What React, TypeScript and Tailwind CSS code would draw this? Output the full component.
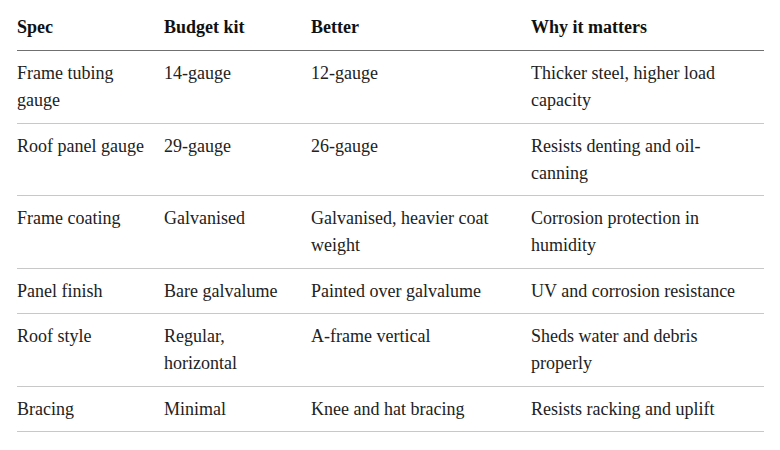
import React from "react";

const rows: [string, string, string, string][] = [
  ["Frame tubing gauge", "14-gauge", "12-gauge", "Thicker steel, higher load capacity"],
  ["Roof panel gauge", "29-gauge", "26-gauge", "Resists denting and oil-canning"],
  ["Frame coating", "Galvanised", "Galvanised, heavier coat weight", "Corrosion protection in humidity"],
  ["Panel finish", "Bare galvalume", "Painted over galvalume", "UV and corrosion resistance"],
  ["Roof style", "Regular, horizontal", "A-frame vertical", "Sheds water and debris properly"],
  ["Bracing", "Minimal", "Knee and hat bracing", "Resists racking and uplift"],
];

export default function App() {
  return (
    <div
      className="w-[780px] h-[450px] bg-white pl-[17px] pt-[5px] text-[18px] leading-[27px] text-[#222222]"
      style={{ fontFamily: '"Liberation Serif", "Times New Roman", serif' }}
    >
      <div className="w-[747px]">
        <div className="grid grid-cols-[147px_147px_220px_233px] border-b border-[#707070] font-bold text-[#111111]">
          {["Spec", "Budget kit", "Better", "Why it matters"].map((h) => (
            <div key={h} className="pt-[9px] pb-[9px] pr-[16px]">
              {h}
            </div>
          ))}
        </div>
        {rows.map((r, i) => (
          <div
            key={i}
            className="grid grid-cols-[147px_147px_220px_233px] border-b border-[#c8c8c8]"
          >
            {r.map((c, j) => (
              <div key={j} className="pt-[9px] pb-[8.5px] pr-[16px]">
                {c}
              </div>
            ))}
          </div>
        ))}
      </div>
    </div>
  );
}
